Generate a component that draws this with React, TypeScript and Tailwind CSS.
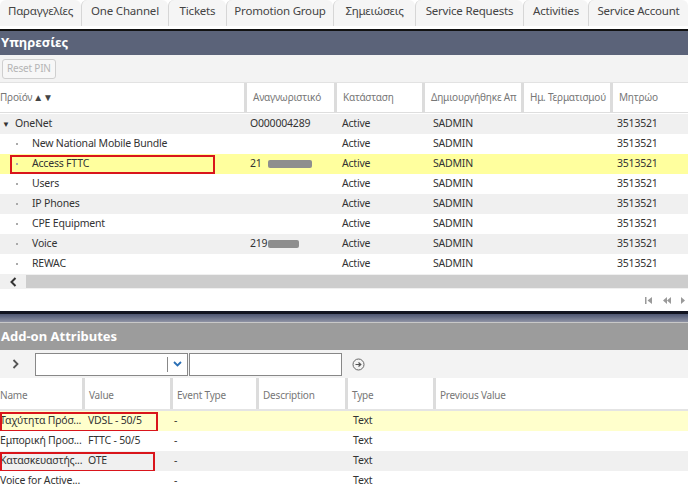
import React from "react";

const tabs = [
  { t: "Παραγγελίες", w: 81 },
  { t: "One Channel", w: 87 },
  { t: "Tickets", w: 58 },
  { t: "Promotion Group", w: 107 },
  { t: "Σημειώσεις", w: 82 },
  { t: "Service Requests", w: 108 },
  { t: "Activities", w: 65 },
  { t: "Service Account", w: 100 },
];

const cols = [244, 90, 88, 99, 89, 78];

type Row = { name: string; id?: string; blur?: number; parent?: boolean; bg: string; box?: boolean };
const rows: Row[] = [
  { name: "OneNet", id: "O000004289", parent: true, bg: "bg-[#f0f0f0]" },
  { name: "New National Mobile Bundle", bg: "bg-white" },
  { name: "Access FTTC", id: "21", blur: 1, bg: "bg-[#ffff9e]", box: true },
  { name: "Users", bg: "bg-white" },
  { name: "IP Phones", bg: "bg-[#f0f0f0]" },
  { name: "CPE Equipment", bg: "bg-white" },
  { name: "Voice", id: "219", blur: 2, bg: "bg-[#f0f0f0]" },
  { name: "REWAC", bg: "bg-white" },
];

const attrs = [
  { n: "Ταχύτητα Πρόσ...", v: "VDSL - 50/5", bg: "bg-[#ffffcc]", box: 158 },
  { n: "Εμπορική Προσ...", v: "FTTC - 50/5", bg: "bg-white" },
  { n: "Κατασκευαστής...", v: "OTE", bg: "bg-[#f0f0f0]", box: 155 },
  { n: "Voice for Active...", v: "", bg: "bg-white" },
];

const attrCols = [82, 88, 86, 89, 88, 155];

export default function App() {
  return (
    <div className="w-[688px] h-[496px] overflow-hidden bg-white text-[#333] text-[10.5px] tracking-[-0.2px]" style={{ fontFamily: '"Noto Sans", "Open Sans", sans-serif' }}>
      {/* Tabs */}
      <div className="flex h-[26px] bg-white">
        {tabs.map((t, i) => (
          <div
            key={i}
            style={{ width: t.w }}
            className={`shrink-0 flex items-center justify-center pb-[5px] text-[11.5px] text-[#444] bg-[#f5f5f5] rounded-t-[6px] ${i === 0 ? "" : "border-l border-[#d6d6d6]"}`}
          >
            <span className="whitespace-nowrap">{t.t}</span>
          </div>
        ))}
      </div>
      <div className="h-[3px] bg-white" />
      {/* Header Υπηρεσίες */}
      <div className="h-[2px] bg-[#111]" />
      <div className="h-[24px] bg-[#5b6379] flex items-center text-white font-bold text-[13px] tracking-normal pl-[1px]">Υπηρεσίες</div>
      {/* Toolbar */}
      <div className="h-[28px] bg-[#f3f3f3] flex items-center px-[2px] border-b border-[#e2e2e2]">
        <div className="h-[20px] px-[4px] border border-[#cfcfcf] rounded-[3px] bg-[#f7f7f7] text-[#b5b5b5] text-[10px] flex items-center">Reset PIN</div>
      </div>
      {/* Column headers */}
      <div className="flex h-[30px] bg-white text-[#777] text-[10px] border-b border-[#dedede]">
        {["Προϊόν", "Αναγνωριστικό", "Κατάσταση", "Δημιουργήθηκε Απ", "Ημ. Τερματισμού", "Μητρώο"].map((h, i) => (
          <div key={i} style={{ width: cols[i] }} className={`shrink-0 flex items-center overflow-hidden whitespace-nowrap ${i === 0 ? "pl-0" : "pl-[6px] border-l-[3px] border-[#dcdcdc]"}`}>
            {h}
            {i === 0 && <span className="text-[#444] text-[10px] ml-[1px]">▲▼</span>}
          </div>
        ))}
      </div>
      {/* Rows */}
      <div className="pt-[1px]">
        {rows.map((r, i) => (
          <div key={i} className={`relative flex h-[20px] items-center ${r.bg}`}>
            <div style={{ width: cols[0] }} className="shrink-0 flex items-center">
              {r.parent ? (
                <>
                  <span className="w-[15px] pl-[2px] text-[8px] text-[#333]">▼</span>
                  <span>{r.name}</span>
                </>
              ) : (
                <>
                  <span className="ml-[16px] w-[2px] h-[2px] bg-[#aaa] mr-[14px]" />
                  <span>{r.name}</span>
                </>
              )}
            </div>
            <div style={{ width: cols[1] }} className="shrink-0 pl-[6px] flex items-center">
              {r.id}
              {r.blur === 1 && <span className="ml-[6px] w-[44px] h-[8px] bg-[#8e8e8e] rounded-[2px]" />}
              {r.blur === 2 && <span className="ml-[1px] w-[31px] h-[8px] bg-[#8e8e8e] rounded-[2px]" />}
            </div>
            <div style={{ width: cols[2] }} className="shrink-0 pl-[8px]">Active</div>
            <div style={{ width: cols[3] }} className="shrink-0 pl-[11px]">SADMIN</div>
            <div style={{ width: cols[4] }} className="shrink-0" />
            <div style={{ width: cols[5] }} className="shrink-0 pl-[7px]">3513521</div>
            {r.box && <div className="absolute left-[10px] top-[1px] w-[205px] h-[19px] border-2 border-[#d9151b]" />}
          </div>
        ))}
      </div>
      {/* Scrollbar */}
      <div className="flex h-[15px] bg-[#f0f0f0] items-center">
        <div className="w-[26px] h-full flex items-center justify-center">
          <svg width="9" height="10" viewBox="0 0 9 10"><path d="M6.5 1 L2.5 5 L6.5 9" fill="none" stroke="#333" strokeWidth="2" /></svg>
        </div>
        <div className="flex-1 h-[13px] bg-[#cdcdcd]" />
      </div>
      {/* Pager */}
      <div className="h-[22px] bg-white flex items-center justify-end pr-[3px] gap-[10px] text-[#999]">
        <svg width="8" height="7" viewBox="0 0 8 7"><rect x="0" y="0" width="1.5" height="7" fill="#9a9a9a" /><path d="M7 0 L2.5 3.5 L7 7 Z" fill="#9a9a9a" /></svg>
        <svg width="8" height="7" viewBox="0 0 8 7"><path d="M4 0 L0 3.5 L4 7 Z M8 0 L4 3.5 L8 7 Z" fill="#9a9a9a" /></svg>
        <svg width="4" height="7" viewBox="0 0 4 7"><path d="M0 0 L4 3.5 L0 7 Z" fill="#9a9a9a" /></svg>
      </div>
      {/* Divider */}
      <div className="h-[3px] bg-[#121420]" />
      <div className="h-[8px] bg-gradient-to-b from-[#4d5570] to-[#8f93a4]" />
      <div className="h-[1px] bg-[#c8c8c8]" />
      {/* Add-on header */}
      <div className="h-[27px] bg-[#9c9c9c] flex items-center text-white font-bold text-[13px] tracking-normal pl-[1px]">Add-on Attributes</div>
      {/* Filter row */}
      <div className="h-[28px] bg-[#f3f3f3] flex items-center">
        <div className="w-[35px] flex justify-center pr-[4px]">
          <svg width="7" height="10" viewBox="0 0 7 10"><path d="M1.5 1 L5.5 5 L1.5 9" fill="none" stroke="#555" strokeWidth="1.8" /></svg>
        </div>
        <div className="w-[153px] h-[23px] border border-[#888] bg-white flex justify-end items-center">
          <div className="h-[15px] w-[1px] bg-[#888]" />
          <div className="w-[19px] flex justify-center">
            <svg width="9" height="6" viewBox="0 0 9 6"><path d="M1 1 L4.5 4.5 L8 1" fill="none" stroke="#2a6fb5" strokeWidth="1.8" /></svg>
          </div>
        </div>
        <div className="ml-[1px] w-[153px] h-[23px] border border-[#888] bg-white" />
        <div className="ml-[10px]">
          <svg width="13" height="13" viewBox="0 0 13 13"><circle cx="6.5" cy="6.5" r="5.5" fill="none" stroke="#666" strokeWidth="1" /><path d="M3.5 6.5 H8.5 M6.5 4.5 L8.8 6.5 L6.5 8.5" fill="none" stroke="#555" strokeWidth="1.2" /></svg>
        </div>
      </div>
      {/* Attr header */}
      <div className="flex h-[33px] bg-white text-[#777] text-[10px] border-b-2 border-[#e4e4e4]">
        {["Name", "Value", "Event Type", "Description", "Type", "Previous Value"].map((h, i) => (
          <div key={i} style={{ width: attrCols[i] }} className={`shrink-0 flex items-center pt-[3px] whitespace-nowrap ${i === 0 ? "pl-0" : "pl-[4px] border-l-[3px] border-[#dcdcdc]"}`}>
            {h}
          </div>
        ))}
      </div>
      {attrs.map((a, i) => (
        <div key={i} className={`relative flex h-[20px] items-center ${a.bg}`}>
          <div className="w-[85px] shrink-0 whitespace-nowrap">{a.n}</div>
          <div className="w-[89px] shrink-0 pl-[3px]">{a.v}</div>
          <div className="w-[175px] shrink-0">-</div>
          <div className="shrink-0 pl-[4px]">Text</div>
          {a.box && <div style={{ width: a.box }} className="absolute left-0 top-[1px] h-[20px] border-2 border-[#d9151b]" />}
        </div>
      ))}
    </div>
  );
}
